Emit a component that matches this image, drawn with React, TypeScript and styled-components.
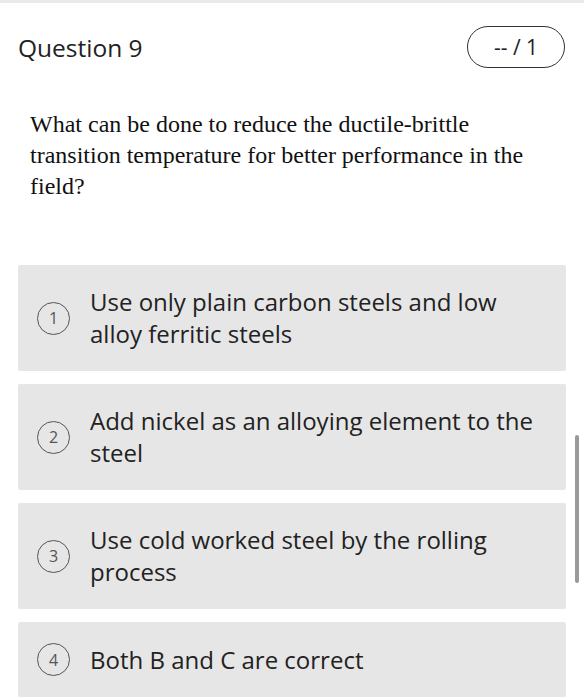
import React from "react";
import styled, { createGlobalStyle } from "styled-components";

const GlobalStyle = createGlobalStyle`
  html, body {
    margin: 0;
    padding: 0;
    background: #ffffff;
  }
  * {
    box-sizing: border-box;
  }
`;

const Page = styled.div`
  position: relative;
  width: 584px;
  height: 700px;
  overflow: hidden;
  border-top: 3px solid #e9e9e9;
  padding: 23px 18px 0 18px;
  font-family: "Open Sans", "Liberation Sans", sans-serif;
  color: #222222;
`;

const Header = styled.div`
  display: flex;
  align-items: center;
  justify-content: space-between;
  height: 42px;
`;

const Title = styled.h2`
  margin: 0;
  font-size: 24.5px;
  font-weight: 400;
  color: #222222;
`;

const ScorePill = styled.div`
  display: flex;
  align-items: center;
  justify-content: center;
  width: 98px;
  height: 42px;
  margin-right: 1px;
  border: 1.5px solid #333333;
  border-radius: 21px;
  font-size: 21px;
  color: #222222;
`;

const Prompt = styled.p`
  margin: 41px 24px 0 12px;
  font-family: "Liberation Serif", "Times New Roman", serif;
  font-size: 24px;
  line-height: 31px;
  color: #111111;
`;

const Options = styled.div`
  display: flex;
  flex-direction: column;
  gap: 13px;
  margin-top: 63px;
`;

const OptionCard = styled.div`
  display: flex;
  align-items: center;
  gap: 20px;
  padding: 21px 21px 21px 19px;
  background: #e6e6e6;
  border-radius: 2px;
`;

const Badge = styled.div`
  flex: none;
  display: flex;
  align-items: center;
  justify-content: center;
  width: 33px;
  height: 33px;
  border: 1.5px solid #555555;
  border-radius: 50%;
  font-size: 16px;
  color: #555555;
`;

const OptionText = styled.div`
  flex: 1;
  font-size: 24px;
  line-height: 32px;
  color: #222222;
`;

const Scrollbar = styled.div`
  position: absolute;
  right: 5px;
  top: 432px;
  width: 4px;
  height: 148px;
  border-radius: 2px;
  background: #9a9a9a;
`;

const options = [
  "Use only plain carbon steels and low alloy ferritic steels",
  "Add nickel as an alloying element to the steel",
  "Use cold worked steel by the rolling process",
  "Both B and C are correct",
];

export default function App() {
  return (
    <>
      <GlobalStyle />
      <Page>
        <Header>
          <Title>Question 9</Title>
          <ScorePill>-- / 1</ScorePill>
        </Header>
        <Prompt>
          What can be done to reduce the ductile-brittle transition temperature
          for better performance in the field?
        </Prompt>
        <Options>
          {options.map((text, i) => (
            <OptionCard key={text}>
              <Badge>{i + 1}</Badge>
              <OptionText>{text}</OptionText>
            </OptionCard>
          ))}
        </Options>
        <Scrollbar />
      </Page>
    </>
  );
}
